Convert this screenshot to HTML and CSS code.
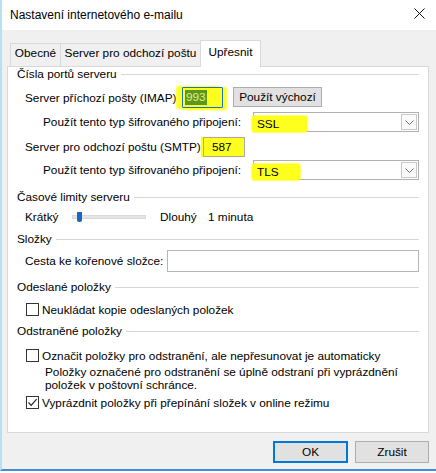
FILE: index.html
```html
<!DOCTYPE html>
<html lang="cs">
<head>
<meta charset="utf-8">
<title>Nastavení internetového e-mailu</title>
<link rel="stylesheet" href="styles.css">
</head>
<body>
<div class="win">
  <div class="titlebar">
    <span class="title">Nastavení internetového e-mailu</span>
    <svg class="close" width="11" height="11" viewBox="0 0 11 11"><path d="M0.5 0.5L10.5 10.5M10.5 0.5L0.5 10.5" stroke="#111" stroke-width="1"/></svg>
  </div>
  <div class="main">
    <div class="tabs">
      <div class="tab t1">Obecné</div>
      <div class="tab t2">Server pro odchozí poštu</div>
      <div class="tab t3 active">Upřesnit</div>
    </div>
    <div class="panel">
      <div class="legend l1"><span>Čísla portů serveru</span><i></i></div>
      <div class="row imap">
        <span class="lbl w157">Server příchozí pošty (IMAP):</span>
        <span class="field port993"><span class="seltext">993</span></span>
        <span class="btn deflt">Použít výchozí</span>
      </div>
      <div class="row sel1 enc">
        <span class="lbl w210">Použít tento typ šifrovaného připojení:</span>
        <span class="combo"><span class="val v-ssl">SSL</span><span class="arrow"><svg width="9" height="5" viewBox="0 0 9 5"><path d="M0.5 0.5L4.5 4.5L8.5 0.5" fill="none" stroke="#6d6d6d" stroke-width="1"/></svg></span></span>
      </div>
      <div class="row smtp">
        <span class="lbl w178">Server pro odchozí poštu (SMTP):</span>
        <span class="field port587">587</span>
      </div>
      <div class="row sel2 enc">
        <span class="lbl w210">Použít tento typ šifrovaného připojení:</span>
        <span class="combo"><span class="val v-tls">TLS</span><span class="arrow"><svg width="9" height="5" viewBox="0 0 9 5"><path d="M0.5 0.5L4.5 4.5L8.5 0.5" fill="none" stroke="#6d6d6d" stroke-width="1"/></svg></span></span>
      </div>
      <div class="legend l2"><span>Časové limity serveru</span><i></i></div>
      <div class="row slider">
        <span class="lbl w47">Krátký</span>
        <span class="track"><span class="thumb"></span></span>
        <span class="lbl w48 dl">Dlouhý</span>
        <span class="lbl">1 minuta</span>
      </div>
      <div class="legend l3"><span>Složky</span><i></i></div>
      <div class="row path">
        <span class="lbl w142">Cesta ke kořenové složce:</span>
        <span class="field pathin"></span>
      </div>
      <div class="legend l4"><span>Odeslané položky</span><i></i></div>
      <div class="row check c1"><span class="box"></span><span class="ctext">Neukládat kopie odeslaných položek</span></div>
      <div class="legend l5"><span>Odstraněné položky</span><i></i></div>
      <div class="row check c2"><span class="box"></span><span class="ctext">Označit položky pro odstranění, ale nepřesunovat je automaticky</span></div>
      <div class="note">Položky označené pro odstranění se úplně odstraní při vyprázdnění<br>položek v poštovní schránce.</div>
      <div class="row check c3"><span class="box"><svg width="11" height="11" viewBox="0 0 11 11"><path d="M1.5 5.5L4.2 8.3L9.6 2.2" fill="none" stroke="#222" stroke-width="1.2"/></svg></span><span class="ctext">Vyprázdnit položky při přepínání složek v online režimu</span></div>
    </div>
    <div class="buttons">
      <span class="btn ok">OK</span>
      <span class="btn cancel">Zrušit</span>
    </div>
  </div>
</div>
</body>
</html>
```

FILE: styles.css
```css
* { box-sizing: border-box; }
html, body { margin: 0; padding: 0; background: #fbfdfe; }
body {
  width: 436px;
  height: 473px;
  overflow: hidden;
  font-family: "Liberation Sans", Arial, sans-serif;
  font-size: 11.8px;
  color: #000;
}
.win {
  height: 471px;
  border-left: 2px solid #b9dff4;
  border-bottom: 2px solid #3f8fd5;
  background: #f0f0f0;
  display: flex;
  flex-direction: column;
}
.titlebar {
  height: 30px;
  flex: none;
  background: #fff;
  display: flex;
  align-items: center;
  padding: 0 11px 0 8px;
}
.title { font-size: 12px; }
.close { margin-left: auto; margin-bottom: 4px; }

.main { padding: 10px 7px 0 5px; }

.tabs {
  display: flex;
  align-items: flex-end;
  height: 26px;
  padding-left: 3px;
}
.tab {
  height: 23px;
  border: 1px solid #d9d9d9;
  border-bottom: none;
  margin-right: -1px;
  background: #f0f0f0;
  display: flex;
  align-items: center;
  justify-content: center;
  padding-bottom: 5px;
  white-space: nowrap;
}
.t1 { width: 51px; }
.t2 { width: 141px; }
.t3 { width: 61px; }
.tab.active {
  height: 27px;
  margin-bottom: -1px;
  background: #fff;
  position: relative;
  z-index: 1;
  padding-bottom: 5px;
}

.panel {
  height: 367px;
  background: #fff;
  border: 1px solid #d9d9d9;
  padding: 0 9px;
  display: flex;
  flex-direction: column;
}

.legend {
  display: flex;
  align-items: center;
  height: 14px;
  line-height: 14px;
  flex: none;
}
.legend span { white-space: nowrap; }
.legend i {
  flex: 1;
  height: 1px;
  background: #d7d7d7;
  margin-left: 4px;
  margin-top: 1px;
}
.l1 { margin-top: 0; }
.l2 { margin-top: 10px; }
.l3 { margin-top: 8px; }
.l4 { margin-top: 8px; }
.l5 { margin-top: 8px; }

.row {
  display: flex;
  align-items: center;
  flex: none;
  white-space: nowrap;
}
.lbl { flex: none; }
.w157 { width: 157px; }
.w210 { width: 210px; }
.w178 { width: 178px; }
.w47 { width: 47px; }
.w48 { width: 48px; }
.w142 { width: 142px; }

.imap { margin-top: 6px; height: 21px; padding-left: 8px; }
.sel1 { margin-top: 4px; height: 20px; }
.smtp { margin-top: 5px; height: 20px; padding-left: 8px; }
.sel2 { margin-top: 3px; height: 20px; }
.enc { padding-left: 26px; }

.field {
  display: flex;
  align-items: center;
  height: 100%;
  border: 1px solid #a9a9a9;
  background: #fff;
  flex: none;
}
.port993 {
  width: 41px;
  border-color: #1a73c9;
  background: #ffff1e;
  padding-left: 2px;
  box-shadow: -5px 0 2px 1px #ffff1e, 3px 1px 2px 1px #ffff1e;
  border-radius: 1px;
}
.seltext {
  background: #5f9620;
  color: #d8f27e;
  padding: 1px 1px;
  line-height: 13px;
}
.port587 {
  width: 42px;
  background: #ffff1e;
  padding-left: 8px;
  box-shadow: -2px 0 1px 0 #ffff1e;
}
.btn {
  display: flex;
  align-items: center;
  justify-content: center;
  background: #e1e1e1;
  border: 1px solid #adadad;
  flex: none;
}
.deflt { width: 89px; height: 20px; margin-left: 10px; align-self: flex-start; }

.combo {
  width: 166px;
  height: 20px;
  border: 1px solid #b0b0b0;
  background: #fff;
  display: flex;
  align-items: center;
  flex: none;
}
.val {
  height: 16px;
  margin-left: -2px;
  padding-left: 5px;
  background: #ffff1e;
  border-radius: 3px;
  box-shadow: 0 0 1px 1px rgba(255, 255, 30, 0.7);
  display: flex;
  align-items: center;
}
.v-ssl { width: 55px; margin-top: 3px; }
.v-tls { width: 48px; margin-top: 3px; }
.arrow {
  margin-left: auto;
  margin-right: 1px;
  width: 16px;
  height: 16px;
  border: 1px solid #c9c9c9;
  background: #fafafa;
  display: flex;
  align-items: center;
  justify-content: center;
}

.slider { margin-top: 6px; height: 14px; padding-left: 8px; }
.track {
  width: 74px;
  height: 4px;
  background: #e5e5e5;
  border: 1px solid #dadada;
  display: flex;
  align-items: center;
  flex: none;
}
.thumb {
  width: 5px;
  height: 10px;
  margin-left: 4px;
  background: #1668c4;
  border-radius: 0 0 2px 2px;
  flex: none;
}
.dl { margin-left: 14px; }

.path { margin-top: 4px; height: 22px; padding-left: 8px; }
.pathin { width: 252px; border-color: #b5b5b5; }

.check { height: 13px; padding-left: 9px; }
.c1 { margin-top: 9px; }
.c2 { margin-top: 11px; }
.c3 { margin-top: 4px; }
.box {
  width: 13px;
  height: 13px;
  border: 1px solid #333;
  background: #fff;
  flex: none;
  display: flex;
  align-items: center;
  justify-content: center;
}
.ctext { margin-left: 3px; line-height: 14px; }

.note {
  margin-top: 4px;
  padding-left: 28px;
  line-height: 13px;
  flex: none;
}

.buttons {
  display: flex;
  justify-content: flex-end;
  gap: 7px;
  margin-top: 8px;
}
.ok { width: 75px; height: 22px; border: 2px solid #0078d7; }
.cancel { width: 74px; height: 22px; }
```
